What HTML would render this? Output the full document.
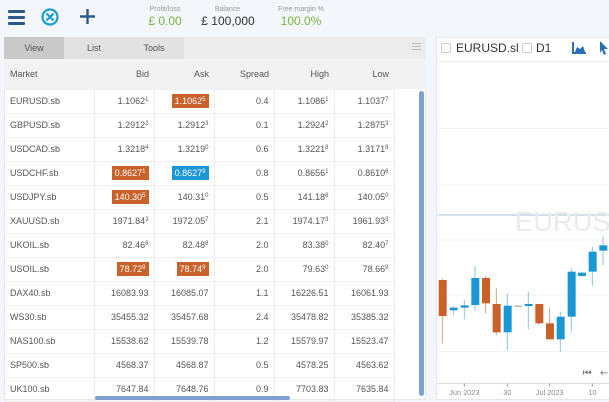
<!DOCTYPE html><html><head><style>
*{margin:0;padding:0;box-sizing:border-box}
body{width:609px;height:400px;overflow:hidden;background:#f3f6fa;font-family:"Liberation Sans",sans-serif;position:relative;color:#444}
.a{position:absolute}
.lbl{font-size:7px;color:#999;text-align:center}
.val{font-size:12px;text-align:center}
table{border-collapse:collapse;font-size:9px;color:#555}
td{height:24px;padding:0 5px;text-align:right;border-right:1px solid #eee;border-bottom:1px solid #eee;white-space:nowrap}
td:first-child{text-align:left;padding-left:6px}
sup{font-size:6px;vertical-align:3px}
.o,.b{color:#fff;padding:2px 3px}
.o{background:#c8622a}.b{background:#1a98d5}
</style></head><body>
<div class="a" style="left:8px;top:10px;width:17px;height:3px;background:#2d5a87;border-radius:1px"></div>
<div class="a" style="left:8px;top:16px;width:17px;height:3px;background:#2d5a87;border-radius:1px"></div>
<div class="a" style="left:8px;top:22px;width:17px;height:3px;background:#2d5a87;border-radius:1px"></div>
<svg class="a" style="left:41px;top:8px" width="18" height="18" viewBox="0 0 18 18"><circle cx="9" cy="9" r="7.5" fill="none" stroke="#1a9fd0" stroke-width="2.2"/><path d="M5.5 5.5L12.5 12.5M12.5 5.5L5.5 12.5" stroke="#1a9fd0" stroke-width="2.2"/></svg>
<svg class="a" style="left:79px;top:8px" width="17" height="17"><path d="M8.5 1V16M1 8.5H16" stroke="#2d5a87" stroke-width="2.4"/></svg>
<div class="a lbl" style="left:140px;top:6px;width:50px">Profit/loss</div>
<div class="a val" style="left:140px;top:14px;width:50px;color:#7cb342">£ 0.00</div>
<div class="a lbl" style="left:200px;top:6px;width:55px">Balance</div>
<div class="a val" style="left:198px;top:14px;width:60px;color:#333">£ 100,000</div>
<div class="a lbl" style="left:272px;top:6px;width:58px">Free margin %</div>
<div class="a val" style="left:272px;top:14px;width:58px;color:#7cb342">100.0%</div>
<div class="a" style="left:4px;top:37px;width:422px;height:363px;background:#fff;border:1px solid #e4e7ea"></div>
<div class="a" style="left:4px;top:37px;width:422px;height:22px;background:#ececec"></div>
<div class="a" style="left:4px;top:37px;width:60px;height:22px;background:#c9c9c9;font-size:9px;text-align:center;line-height:22px;color:#555">View</div>
<div class="a" style="left:64px;top:37px;width:120px;height:22px;background:#e2e2e2"></div>
<div class="a" style="left:64px;top:37px;width:60px;height:22px;font-size:9px;text-align:center;line-height:22px;color:#555">List</div>
<div class="a" style="left:124px;top:37px;width:60px;height:22px;font-size:9px;text-align:center;line-height:22px;color:#555">Tools</div>
<div class="a" style="left:412px;top:43px;width:9px;height:1px;background:#bbb;box-shadow:0 3px #bbb,0 6px #bbb"></div>
<div class="a" style="left:4px;top:59px;width:422px;height:30px;background:#f2f2f2"></div>
<table class="a" style="left:4px;top:59px;width:390px;table-layout:fixed">
<colgroup><col style="width:90px"><col style="width:60px"><col style="width:60px"><col style="width:60px"><col style="width:60px"><col style="width:60px"></colgroup>
<tr style="background:#f2f2f2"><td style="height:30px;border-right:none">Market</td><td style="border-right:none">Bid</td><td style="border-right:none">Ask</td><td style="border-right:none">Spread</td><td style="border-right:none">High</td><td style="border-right:none">Low</td></tr>
<tr><td>EURUSD.sb</td><td>1.1062<sup>1</sup></td><td><span class="o">1.1062<sup>5</sup></span></td><td>0.4</td><td>1.1086<sup>1</sup></td><td>1.1037<sup>7</sup></td></tr>
<tr><td>GBPUSD.sb</td><td>1.2912<sup>2</sup></td><td>1.2912<sup>3</sup></td><td>0.1</td><td>1.2924<sup>2</sup></td><td>1.2875<sup>3</sup></td></tr>
<tr><td>USDCAD.sb</td><td>1.3218<sup>4</sup></td><td>1.3219<sup>0</sup></td><td>0.6</td><td>1.3221<sup>8</sup></td><td>1.3171<sup>8</sup></td></tr>
<tr><td>USDCHF.sb</td><td><span class="o">0.8627<sup>1</sup></span></td><td><span class="b">0.8627<sup>9</sup></span></td><td>0.8</td><td>0.8656<sup>1</sup></td><td>0.8610<sup>6</sup></td></tr>
<tr><td>USDJPY.sb</td><td><span class="o">140.30<sup>5</sup></span></td><td>140.31<sup>0</sup></td><td>0.5</td><td>141.18<sup>6</sup></td><td>140.05<sup>0</sup></td></tr>
<tr><td>XAUUSD.sb</td><td>1971.84<sup>3</sup></td><td>1972.05<sup>7</sup></td><td>2.1</td><td>1974.17<sup>3</sup></td><td>1961.93<sup>3</sup></td></tr>
<tr><td>UKOIL.sb</td><td>82.46<sup>8</sup></td><td>82.48<sup>8</sup></td><td>2.0</td><td>83.38<sup>0</sup></td><td>82.40<sup>7</sup></td></tr>
<tr><td>USOIL.sb</td><td><span class="o">78.72<sup>9</sup></span></td><td><span class="o">78.74<sup>9</sup></span></td><td>2.0</td><td>79.63<sup>0</sup></td><td>78.66<sup>9</sup></td></tr>
<tr><td>DAX40.sb</td><td>16083.93</td><td>16085.07</td><td>1.1</td><td>16226.51</td><td>16061.93</td></tr>
<tr><td>WS30.sb</td><td>35455.32</td><td>35457.68</td><td>2.4</td><td>35478.82</td><td>35385.32</td></tr>
<tr><td>NAS100.sb</td><td>15538.62</td><td>15539.78</td><td>1.2</td><td>15579.97</td><td>15523.47</td></tr>
<tr><td>SP500.sb</td><td>4568.37</td><td>4568.87</td><td>0.5</td><td>4578.25</td><td>4563.62</td></tr>
<tr><td>UK100.sb</td><td>7647.84</td><td>7648.76</td><td>0.9</td><td>7703.83</td><td>7635.84</td></tr>
</table>
<div class="a" style="left:419px;top:91px;width:5px;height:305px;background:#7fa1cf;border-radius:3px"></div>
<div class="a" style="left:95px;top:396px;width:195px;height:4px;background:#7fa1cf;border-radius:2px"></div>
<div class="a" style="left:436px;top:37px;width:180px;height:363px;background:#fff;border:1px solid #e4e7ea"></div>
<div class="a" style="left:437px;top:37px;width:172px;height:25px;border-bottom:1px solid #eee"></div>
<div class="a" style="left:441px;top:43px;width:10px;height:10px;border:1px solid #ccc;border-radius:2px"></div>
<div class="a" style="left:456px;top:41px;font-size:12px;color:#333">EURUSD.sl</div>
<div class="a" style="left:522px;top:43px;width:10px;height:10px;border:1px solid #ccc;border-radius:2px"></div>
<div class="a" style="left:536px;top:41px;font-size:12px;color:#333">D1</div>
<svg class="a" style="left:572px;top:42px" width="14" height="12"><path d="M1 0V11H14" stroke="#2d6cb8" stroke-width="2" fill="none"/><path d="M3 10L5 5L8 7L11 4L13 10Z" fill="#2d6cb8"/></svg>
<svg class="a" style="left:599px;top:41px" width="10" height="14"><path d="M1 0L9 8L5 8L7 13L5 14L3 9L1 12Z" fill="#2d6cb8"/></svg>
<svg class="a" style="left:430px;top:30px" width="179" height="370" viewBox="0 0 537 1110">
<g stroke="#f0f0f0" stroke-width="3"><path d="M22 295H537M22 465H537M22 630H537M22 795H537M22 965H537"/></g>
<path d="M22 555H537" stroke="#a9c3d6" stroke-width="3"/>
<text x="255" y="603" font-family="Liberation Sans" font-size="82" fill="#ebebeb">EURUSD</text>
<g stroke-width="3">
<g stroke="#c8a48a"><path d="M37 745V940M167 738V850M199 775V915M327 822V885M359 832V928"/></g>
<g stroke="#8cc4e4"><path d="M70 828V855M103 810V868M135 708V842M232 790V962M295 785V898M391 845V965M424 715V905M455 725V740M487 650V768M519 620V705"/></g>
</g>
<g fill="#c8622a"><rect x="26" y="750" width="24" height="108"/><rect x="156" y="744" width="24" height="76"/><rect x="188" y="822" width="24" height="85"/><rect x="316" y="822" width="24" height="58"/><rect x="348" y="880" width="24" height="48"/></g>
<g fill="#1a98d5"><rect x="59" y="833" width="24" height="8"/><rect x="92" y="826" width="24" height="7"/><rect x="124" y="744" width="24" height="81"/><rect x="221" y="827" width="24" height="80"/><rect x="252" y="827" width="24" height="3" fill="#999"/><rect x="284" y="822" width="24" height="6"/><rect x="380" y="860" width="24" height="68"/><rect x="413" y="725" width="24" height="135"/><rect x="444" y="728" width="24" height="10"/><rect x="476" y="665" width="24" height="60"/><rect x="508" y="646" width="24" height="16"/></g>
<path d="M22 1060H537" stroke="#ddd" stroke-width="3"/>
<g stroke="#999" stroke-width="3"><path d="M103 1060V1070M232 1060V1070M359 1060V1070M487 1060V1070"/></g>
<text x="458" y="1038" font-size="30" fill="#777" font-family="DejaVu Sans">⏮</text>
<text x="510" y="1038" font-size="30" fill="#777" font-family="DejaVu Sans">←</text>
<g font-family="Liberation Sans" font-size="22" fill="#888" text-anchor="middle"><text x="103" y="1095">Jun 2023</text><text x="232" y="1095">30</text><text x="359" y="1095">Jul 2023</text><text x="487" y="1095">10</text></g>
</svg>
</body></html>
